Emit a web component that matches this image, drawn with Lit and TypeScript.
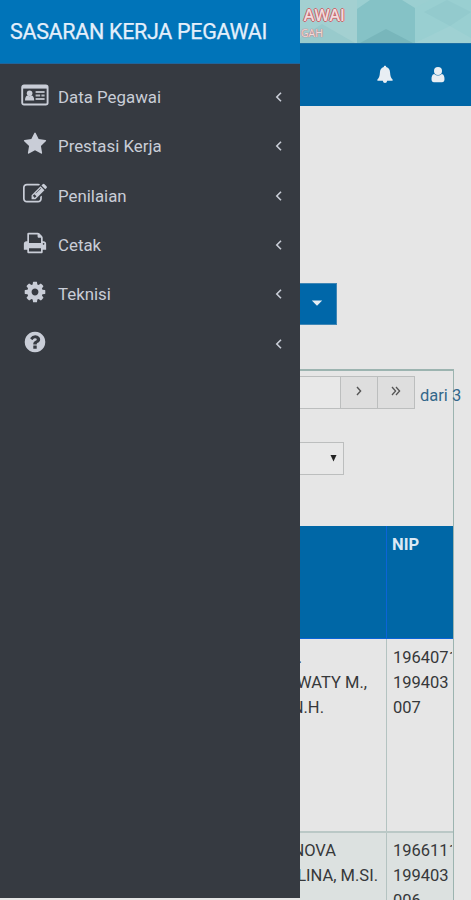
import { LitElement, html, css, svg } from "lit";
import { customElement } from "lit/decorators.js";

const CARD = svg`<svg width="28" height="22" viewBox="0 0 28 22"><rect x="1.2" y="1.5" width="25.4" height="19" rx="1.8" fill="none" stroke="currentColor" stroke-width="1.9"/><path d="M1 2h26v2.6H1z" fill="currentColor"/><circle cx="8.6" cy="9.2" r="2.8" fill="currentColor"/><path d="M4 16.600c0-3.400 1.400-5 2.600-5q2 1.200 4 0c1.200 0 2.600 1.600 2.600 5z" fill="currentColor"/><path d="M14.600 8h9M14.600 11.400h4.600M20.400 11.400h3.200M14.600 15h9" stroke="currentColor" stroke-width="2" opacity=".85"/></svg>`;
const fa = (d: string) => svg`<svg width="24" height="24" viewBox="0 0 1792 1792"><path fill="currentColor" d=${d}/></svg>`;
const STAR = fa("M1728 647q0 22-26 48l-363 354 86 500q1 7 1 20 0 21-10.5 35.5t-30.5 14.5q-19 0-40-12l-449-236-449 236q-22 12-40 12-21 0-31.5-14.5t-10.5-35.5q0-6 2-20l86-500-364-354q-25-27-25-48 0-37 56-46l502-73 225-455q19-41 49-41t49 41l225 455 502 73q56 9 56 46z");
const EDIT = fa("M888 1184l116-116-152-152-116 116v56h96v96h56zm440-720q-16-16-33 1l-350 350q-17 17-1 33t33-1l350-350q17-17 1-33zm80 594v190q0 119-84.5 203.5t-203.5 84.5h-832q-119 0-203.5-84.5t-84.5-203.5v-832q0-119 84.5-203.5t203.5-84.5h832q63 0 117 25 15 7 18 23 3 17-9 29l-49 49q-14 14-32 8-23-6-45-6h-832q-66 0-113 47t-47 113v832q0 66 47 113t113 47h832q66 0 113-47t47-113v-126q0-13 9-22l64-64q15-15 35-7t20 29zm-96-738l288 288-672 672h-288v-288zm444 132l-92 92-288-288 92-92q28-28 68-28t68 28l152 152q28 28 28 68t-28 68z");
const PRINT = fa("M448 1536h896v-256h-896v256zm0-640h896v-384h-160q-40 0-68-28t-28-68v-160h-640v640zm1152 64q0-26-19-45t-45-19-45 19-19 45 19 45 45 19 45-19 19-45zm128 0v416q0 13-9.5 22.5t-22.5 9.5h-224v160q0 40-28 68t-68 28h-960q-40 0-68-28t-28-68v-160h-224q-13 0-22.5-9.5t-9.5-22.5v-416q0-79 56.5-135.5t135.5-56.5h64v-544q0-40 28-68t68-28h672q40 0 88 20t76 48l152 152q28 28 48 76t20 88v256h64q79 0 135.5 56.5t56.5 135.5z");
const COG = fa("M1152 896q0-106-75-181t-181-75-181 75-75 181 75 181 181 75 181-75 75-181zm512-109v222q0 12-8 23t-20 13l-185 28q-19 54-39 91 35 50 107 138 10 12 10 25t-9 23q-27 37-99 108t-94 71q-12 0-26-9l-138-108q-44 23-91 38-16 136-29 186-7 28-36 28h-222q-14 0-24.5-8.5t-11.5-21.5l-28-184q-49-16-90-37l-141 107q-10 9-25 9-14 0-25-11-126-114-165-168-7-10-7-23 0-12 8-23 15-21 51-66.5t54-70.5q-27-50-41-99l-183-27q-13-2-21-12.5t-8-23.5v-222q0-12 8-23t19-13l186-28q14-46 39-92-40-57-107-138-10-12-10-24 0-10 9-23 26-36 98.5-107.5t94.5-71.5q13 0 26 10l138 107q44-23 91-38 16-136 29-186 7-28 36-28h222q14 0 24.5 8.5t11.5 21.5l28 184q49 16 90 37l142-107q9-9 24-9 13 0 25 10 129 119 165 170 7 8 7 22 0 12-8 23-15 21-51 66.5t-54 70.5q26 50 41 98l183 28q13 2 21 12.5t8 23.5z");
const HELP = fa("M1024 1376v-192q0-14-9-23t-23-9h-192q-14 0-23 9t-9 23v192q0 14 9 23t23 9h192q14 0 23-9t9-23zm256-672q0-88-55.5-163t-138.5-116-170-41q-243 0-371 213-15 24 8 42l132 100q7 6 19 6 16 0 25-12 53-68 86-92 34-24 86-24 48 0 85.5 26t37.5 59q0 38-20 61t-68 45q-63 28-115.5 86.5t-52.5 125.5v36q0 14 9 23t23 9h192q14 0 23-9t9-23q0-19 21.5-49.5t54.5-49.5q32-18 49-28.5t46-35 44.5-48 28-60.5 12.5-81zm384 192q0 209-103 385.5t-279.5 279.5-385.5 103-385.5-103-279.5-279.5-103-385.5 103-385.5 279.5-279.5 385.5-103 385.5 103 279.5 279.5 103 385.5z");

const MENU = [
  { icon: CARD, label: "Data Pegawai" },
  { icon: STAR, label: "Prestasi Kerja" },
  { icon: EDIT, label: "Penilaian" },
  { icon: PRINT, label: "Cetak" },
  { icon: COG, label: "Teknisi" },
  { icon: HELP, label: "" },
];

/* end: distance from the left edge of the name column to the end of the line */
const ROWS = [
  { name: [{ t: ".", end: 2 }, { t: "WATY M.,", end: 67 }, { t: "N.H.", end: 24 }], nip: ["19640717", "199403", "007"] },
  { name: [{ t: "NOVA", end: 36 }, { t: "LINA, M.SI.", end: 78 }], nip: ["19661117", "199403", "006"] },
];

@customElement("app-root")
export class AppRoot extends LitElement {
  static styles = css`
    :host { display: block; position: relative; width: 471px; height: 900px; overflow: hidden; background: #e6e6e6; font-family: Roboto, sans-serif; }
    * { box-sizing: border-box; }
    svg { display: block; }
    .sidebar { position: absolute; left: 0; top: 0; width: 300px; height: 898px; background: #363a41; color: #c9cdd7; z-index: 2; }
    .brand { height: 64px; background: #0074b9; color: #e4effb; font-size: 21.5px; line-height: 64px; padding-left: 10px; white-space: nowrap; border-bottom: 1px solid #21649a; }
    .title { display: inline-block; letter-spacing: -0.32px; -webkit-text-stroke: 0.25px currentColor; }
    .menu { padding-top: 8.6px; }
    .item { height: 49.4px; display: flex; align-items: center; padding: 0 17px 0 21px; }
    .ico { width: 28px; display: flex; justify-content: center; margin: -5px 9px 0 0; }
    .label { flex: 1; font-size: 16.85px; margin-top: -1px; }
    .chev { margin-top: -1px; }
    .page { padding-left: 300px; height: 900px; display: flex; flex-direction: column; }
    .banner { height: 43px; background: #9bcfd1; position: relative; overflow: hidden; flex: none; }
    .art { position: absolute; left: 0; top: 0; }
    .words { position: relative; color: #f1dcdd; white-space: nowrap; padding-top: 6px; text-shadow: 1px 0 #c9686e, -1px 0 #c9686e, 0 1px #c9686e, 0 -1px #c9686e; font-family: "Open Sans", sans-serif; }
    .w1, .w2 { display: flex; justify-content: flex-end; }
    .w1 { width: 45px; font-size: 16px; line-height: 19px; font-weight: 600; }
    .w2 { width: 23px; font-size: 10.5px; line-height: 16px; text-shadow: 0 0 1px #c9686e, 0 0 1px #c9686e; }
    .nav { height: 63px; flex: none; background: #0066a6; display: flex; align-items: center; gap: 38px; padding-left: 76.5px; border-top: 1px solid #1c6ea4; }
    .drop { margin-top: 177px; width: 37px; height: 42px; flex: none; background: #0067a9; border: 1px solid #3f86b5; border-left: 0; display: flex; justify-content: center; padding-top: 16px; padding-right: 3px; }
    .panel { margin-top: 44px; width: 154px; height: 531px; flex: none; border: 1px solid #9cb4b0; border-width: 2px 1.5px 0 0; }
    .pager { display: flex; margin-top: 5px; height: 34px; width: 170px; }
    .cell { border: 1px solid #bcbebe; border-left: 0; height: 33px; display: flex; align-items: center; justify-content: center; background: #dedede; padding-bottom: 4px; }
    .input { width: 41px; background: #e8e8e8; }
    .next { width: 37px; } .last { width: 37px; }
    .of { font-size: 16.5px; color: #34688a; padding: 10px 0 0 5px; white-space: nowrap; line-height: 20px; }
    .select { margin-top: 32px; width: 44px; height: 33px; border: 1px solid #bcbebe; border-left: 0; background: #e8e8e8; display: flex; align-items: center; justify-content: flex-end; padding: 0 6px 2px 0; }
    .table { margin-top: 51px; width: 152.5px; }
    .row { display: grid; grid-template-columns: 86px 66.5px; }
    .head { height: 113px; background: #0067a6; border-bottom: 1px solid #0b64d8; color: #dbe9f5; font-weight: 700; font-size: 16.5px; }
    .head .nip { border-left: 1px solid #0b64d8; padding: 9px 0 0 5px; }
    .body { height: 194px; font-size: 16.5px; line-height: 25px; color: #36383a; border-bottom: 2px solid #bac8c6; }
    .body.alt { background: #dce1e0; height: 67px; overflow: hidden; border: 0; }
    .nip { border-left: 1px solid #b4c3c1; padding: 6px 0 0 6px; overflow: hidden; white-space: nowrap; }
    .name { padding-top: 6px; }
    .alt .name, .alt .nip { padding-top: 5px; }
    .body .nip div { width: 59px; overflow: hidden; }
    .line { height: 25px; display: flex; justify-content: flex-end; white-space: nowrap; }
  `;

  render() {
    return html`
      <aside class="sidebar">
        <div class="brand"><span class="title">SASARAN KERJA PEGAWAI</span></div>
        <nav class="menu">
          ${MENU.map((m) => html`<div class="item"><span class="ico">${m.icon}</span><span class="label">${m.label}</span>
            <svg class="chev" width="9" height="12" viewBox="0 0 9 12"><path d="M7 1.8L2.8 6 7 10.2" fill="none" stroke="currentColor" stroke-width="1.6"/></svg></div>`)}
        </nav>
      </aside>
      <main class="page">
        <header class="banner">
          <svg class="art" width="171" height="43" viewBox="0 0 171 43">
            <path d="M0 0h57v43H0z" fill="#a3d0d1"/><path d="M0 43V38L22 24l33 19z" fill="#98cacc"/><path d="M57 9L70 0h32l13 8v35H57z" fill="#85c2c6"/><path d="M60 43l26-14 27 14z" fill="#78b6bb"/><path d="M115 8L130 0h41v43h-56z" fill="#99cfd1"/><path d="M124 12L147 0l24 12-21 14z" fill="#93cacd"/><path d="M115 43l35-17 21 12v5z" fill="#9fd1d3"/>
          </svg>
          <div class="words"><div class="w1"><span>AWAI</span></div><div class="w2"><span>GAH</span></div></div>
        </header>
        <div class="nav">
          <svg width="16" height="20" viewBox="0 0 16 20"><path d="M8 .8c.8 0 1.2.5 1.2 1.3 2.6.7 3.7 2.6 3.9 5.6.2 3.3.8 5.3 2.5 6.9v1.2H.4v-1.2c1.7-1.6 2.3-3.6 2.5-6.9.2-3 1.3-4.900 3.900-5.600C6.800 1.300 7.200.8 8 .8zM5.700 15.500h4.600q-.5 2.600-2.300 2.600t-2.300-2.600z" fill="#e8eef3"/></svg>
          <svg width="14" height="18" viewBox="0 0 14 18"><circle cx="7" cy="5" r="4" fill="#e8eef3"/><path d="M3.200 8Q7 11 10.800 8C12.800 8.400 13.500 10.500 13.500 13.200 13.500 15 12.500 16.200 11 16.200H3C1.500 16.200.5 15 .5 13.200.5 10.500 1.200 8.400 3.200 8z" fill="#e8eef3"/></svg>
        </div>
        <div class="drop"><svg width="12" height="6" viewBox="0 0 12 6"><path d="M.8.5h10.400L6 5.700z" fill="#e6eef4"/></svg></div>
        <section class="panel">
          <div class="pager">
            <div class="cell input"></div>
            <div class="cell next"><svg width="8" height="12" viewBox="0 0 8 12"><path d="M2 2l3.600 4L2 10" fill="none" stroke="#555" stroke-width="1.400"/></svg></div>
            <div class="cell last"><svg width="12" height="12" viewBox="0 0 12 12"><path d="M2 2l3.600 4L2 10M6 2l3.600 4L6 10" fill="none" stroke="#555" stroke-width="1.300"/></svg></div>
            <div class="of">dari 3</div>
          </div>
          <div class="select"><svg width="7" height="8" viewBox="0 0 7 8"><path d="M.5 1h6L3.500 7.500z" fill="#222"/></svg></div>
          <div class="table">
            <div class="row head"><div></div><div class="nip">NIP</div></div>
            ${ROWS.map((r, i) => html`<div class="row body ${i ? "alt" : ""}">
              <div class="name">${r.name.map((l) => html`<div class="line" style="width:${l.end}px"><span>${l.t}</span></div>`)}</div>
              <div class="nip">${r.nip.map((n) => html`<div>${n}</div>`)}</div></div>`)}
          </div>
        </section>
      </main>`;
  }
}
